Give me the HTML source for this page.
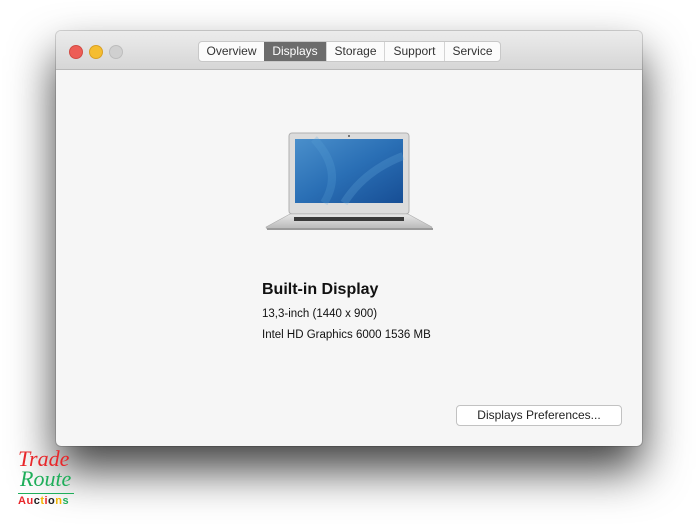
<!DOCTYPE html>
<html><head><style>
body{margin:0;width:698px;height:526px;background:#fff;position:relative;overflow:hidden;font-family:"Liberation Sans",sans-serif}
.win{position:absolute;left:56px;top:31px;width:586px;height:415px;border-radius:5px;background:#f6f6f6;box-shadow:0 24px 45px rgba(0,0,0,.75),0 0 0 1px rgba(0,0,0,.15);overflow:hidden}
.tb{position:absolute;left:0;top:0;width:586px;height:38px;background:linear-gradient(#ececec,#d6d6d6);border-bottom:1px solid #b9b9b9}
.c{position:absolute;top:14px;width:12px;height:12px;border-radius:50%}
.tabs{position:absolute;left:142px;top:10px;height:19px;display:flex;border:1px solid #c8c8c8;border-radius:4px;background:#fbfbfb;overflow:hidden;font-size:12px;color:#333}
.tabs div{height:19px;line-height:19px;text-align:center;border-left:1px solid #d4d4d4;box-sizing:border-box}
.tabs div:first-child{border-left:none}
.tabs .on{background:#6c6c6c;color:#fff;border-left:none}
.t{position:absolute;left:206px;color:#111}
</style></head><body>
<div class="win">
<div class="tb">
<div class="c" style="left:13px;background:#ed5d56;border:.5px solid #d24a43"></div>
<div class="c" style="left:33px;background:#f5bd30;border:.5px solid #d9a024"></div>
<div class="c" style="left:53px;background:#d0d0d0;border:.5px solid #bdbdbd"></div>
<div class="tabs"><div style="width:65px">Overview</div><div class="on" style="width:62px">Displays</div><div style="width:58px">Storage</div><div style="width:60px">Support</div><div style="width:56px">Service</div></div>
</div>
<svg style="position:absolute;left:208px;top:100px" width="172" height="100" viewBox="0 0 172 100">
<defs><linearGradient id="s" x1="0" y1="0" x2="1" y2="1"><stop offset="0" stop-color="#4a8fcb"/><stop offset=".5" stop-color="#2a6fb5"/><stop offset="1" stop-color="#174e95"/></linearGradient>
<linearGradient id="b" x1="0" y1="0" x2="0" y2="1"><stop offset="0" stop-color="#e8e8e8"/><stop offset="1" stop-color="#b8b8b8"/></linearGradient></defs>
<rect x="25" y="2" width="120" height="81" rx="3" fill="#dcdcdc" stroke="#b0b0b0"/>
<rect x="31" y="8" width="108" height="64" fill="url(#s)"/>
<path d="M50 8 Q80 40 60 72" stroke="#5da3d6" stroke-width="8" fill="none" opacity=".25"/>
<path d="M80 72 Q100 40 139 25" stroke="#6ab0de" stroke-width="8" fill="none" opacity=".25"/>
<circle cx="85" cy="5" r="1" fill="#555"/>
<path d="M26 83 L144 83 L168 96 Q168 98 165 98 L5 98 Q2 98 2 96 Z" fill="url(#b)" stroke="#a8a8a8" stroke-width=".6"/>
<rect x="30" y="86" width="110" height="4" fill="#3a3a3a"/>
<rect x="3" y="97" width="166" height="2" fill="#9a9a9a"/>
</svg>
<div class="t" style="top:250px;font-size:16px;font-weight:bold">Built-in Display</div>
<div class="t" style="top:277px;font-size:11.5px">13,3-inch (1440 x 900)</div>
<div class="t" style="top:298px;font-size:11.5px">Intel HD Graphics 6000 1536 MB</div>
<div style="position:absolute;left:400px;top:374px;width:164px;height:19px;border:1px solid #c2c2c2;border-radius:4px;background:#fff;font-size:12px;line-height:19px;text-align:center;color:#222">Displays Preferences...</div>
</div>
<div style="position:absolute;left:18px;top:448px;font-family:'Liberation Serif',serif;font-style:italic;font-size:22px;line-height:22px;color:#e8262a">Trade</div>
<div style="position:absolute;left:20px;top:468px;font-family:'Liberation Serif',serif;font-style:italic;font-size:22px;line-height:22px;color:#1fae5a">Route</div>
<div style="position:absolute;left:18px;top:493px;width:56px;height:1px;background:#1fae5a"></div>
<div style="position:absolute;left:18px;top:495px;font-size:11px;font-weight:bold;letter-spacing:.5px"><span style="color:#e8262a">A</span><span style="color:#e8262a">u</span><span style="color:#222">c</span><span style="color:#f2b400">t</span><span style="color:#e8262a">i</span><span style="color:#222">o</span><span style="color:#f2b400">n</span><span style="color:#1fae5a">s</span></div>
</body></html>
